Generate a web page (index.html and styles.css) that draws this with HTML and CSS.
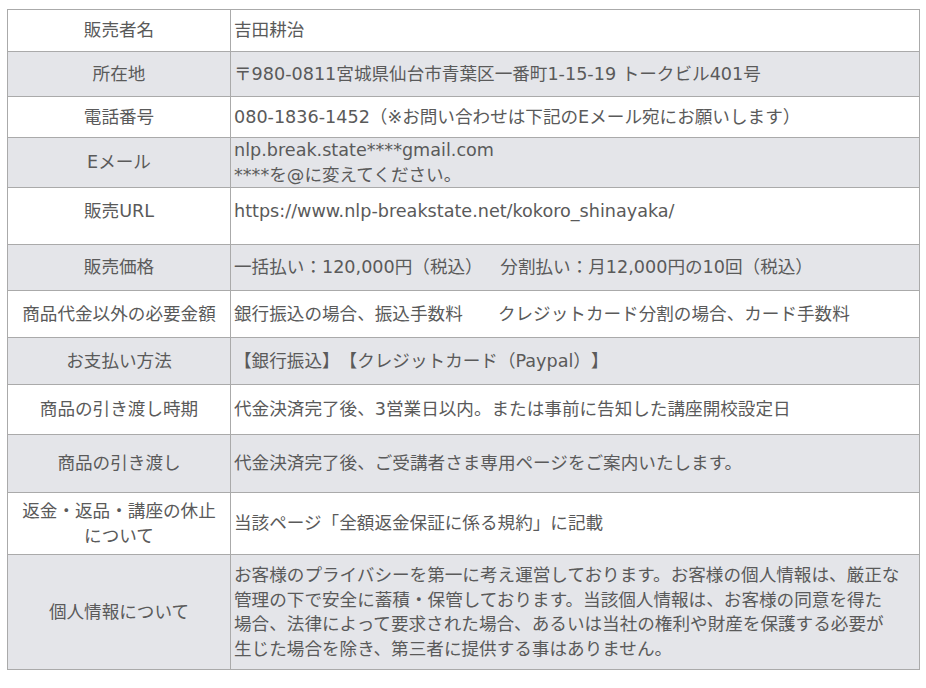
FILE: index.html
```html
<!DOCTYPE html>
<html lang="ja">
<head>
    <meta charset="UTF-8">
    <title>特定商取引法に基づく表記</title>
    <link rel="stylesheet" href="styles.css">
</head>
<body>
    <!-- 特商法表記テーブル -->
    <table class="law-table">
        <tr class="row-42">
            <th>販売者名</th>
            <td>吉田耕治</td>
        </tr>
        <tr class="row-45">
            <th>所在地</th>
            <td>〒980-0811宮城県仙台市青葉区一番町1-15-19 トークビル401号</td>
        </tr>
        <tr class="row-41">
            <th>電話番号</th>
            <td>080-1836-1452（※お問い合わせは下記のEメール宛にお願いします）</td>
        </tr>
        <tr class="row-49">
            <th>Eメール</th>
            <td>nlp.break.state****gmail.com<br>****を@に変えてください。</td>
        </tr>
        <tr class="row-57 row-url">
            <th>販売URL</th>
            <td>https://www.nlp-breakstate.net/kokoro_shinayaka/</td>
        </tr>
        <tr class="row-46">
            <th>販売価格</th>
            <td>一括払い：120,000円（税込）　分割払い：月12,000円の10回（税込）</td>
        </tr>
        <tr class="row-47">
            <th>商品代金以外の必要金額</th>
            <td>銀行振込の場合、振込手数料　　クレジットカード分割の場合、カード手数料</td>
        </tr>
        <tr class="row-47">
            <th>お支払い方法</th>
            <td>【銀行振込】【クレジットカード（Paypal）】</td>
        </tr>
        <tr class="row-50">
            <th>商品の引き渡し時期</th>
            <td>代金決済完了後、3営業日以内。または事前に告知した講座開校設定日</td>
        </tr>
        <tr class="row-58">
            <th>商品の引き渡し</th>
            <td>代金決済完了後、ご受講者さま専用ページをご案内いたします。</td>
        </tr>
        <tr class="row-62">
            <th>返金・返品・講座の休止について</th>
            <td>当該ページ「全額返金保証に係る規約」に記載</td>
        </tr>
        <tr class="row-115">
            <th>個人情報について</th>
            <td>お客様のプライバシーを第一に考え運営しております。お客様の個人情報は、厳正な<br>管理の下で安全に蓄積・保管しております。当該個人情報は、お客様の同意を得た<br>場合、法律によって要求された場合、あるいは当社の権利や財産を保護する必要が<br>生じた場合を除き、第三者に提供する事はありません。</td>
        </tr>
    </table>
</body>
</html>
```

FILE: styles.css
```css
/* 全体 */
body {
    margin: 0;
    padding: 9px 6px 0 7px;
    font-family: "DejaVu Sans", "Noto Sans CJK JP", sans-serif;
    color: #5a5a5a;
    background-color: white;
}

/* テーブル */
.law-table {
    width: 100%;
    border-collapse: collapse;
    font-size: 17.6px;
    line-height: 1.4;
    text-spacing-trim: space-all;
    border: 1px solid #c4c4c4;
}

.law-table th,
.law-table td {
    border: 1px solid #aaa;
    vertical-align: middle;
    font-weight: normal;
}

.law-table th {
    width: 206px;
    padding: 0 8px;
    text-align: center;
}

.law-table td {
    padding: 0 4px 0 3px;
    text-align: left;
}

.law-table tr:nth-child(even) {
    background-color: #e4e5e9;
}

/* URL行は文字が少し上寄り */
.row-url th,
.row-url td {
    padding-bottom: 9px;
}

/* 行の高さ */
.row-41 { height: 41px; }
.row-42 { height: 42px; }
.row-45 { height: 45px; }
.row-46 { height: 46px; }
.row-47 { height: 47px; }
.row-49 { height: 49px; }
.row-50 { height: 50px; }
.row-57 { height: 57px; }
.row-58 { height: 58px; }
.row-62 { height: 62px; }
.row-115 { height: 115px; }
```
